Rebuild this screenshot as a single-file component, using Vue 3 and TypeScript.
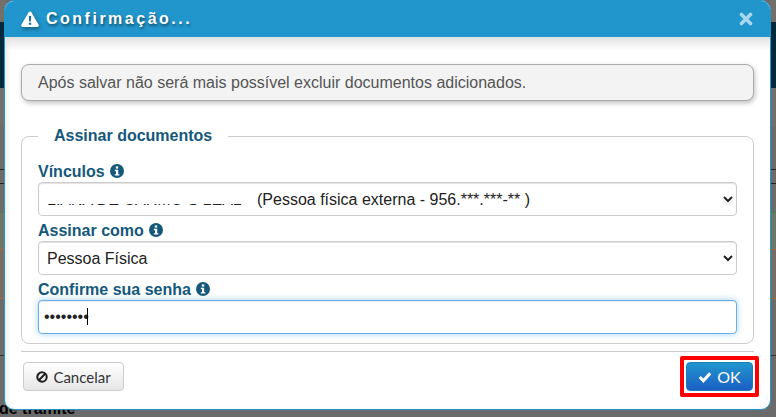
<template>
  <div class="page">
    <div class="backdrop">
      <div class="strip strip-left"></div>
      <div class="strip strip-right"></div>
      <span class="behind-text">de tramite</span>
    </div>

    <div class="modal">
      <header class="modal-header">
        <svg class="warn-icon" viewBox="0 0 18 16" width="18" height="16">
          <path fill-rule="evenodd" fill="#fff" d="M9 0.4c.6 0 1.1.3 1.4.8l7.2 12.6c.6 1-.1 2.2-1.4 2.2H1.8C.5 16-.2 14.800.4 13.800L7.600 1.200C7.900.7 8.400.4 9 .4zM7.800 5l.3 5.600h1.800L10.200 5H7.800zM7.800 11.700v2.100h2.400v-2.100H7.800z" />
        </svg>
        <h4 class="modal-title">Confirmação...</h4>
        <svg class="close-icon" viewBox="0 0 14 14" width="14" height="14">
          <path d="M2.500 2.500l9 9M11.500 2.500l-9 9" stroke="#a9d7ee" stroke-width="3.600" stroke-linecap="round" fill="none" />
        </svg>
      </header>

      <div class="modal-body">
        <div class="alert-box">Após salvar não será mais possível excluir documentos adicionados.</div>

        <fieldset class="sign-box">
          <legend class="sign-legend">Assinar documentos</legend>

          <div class="field-label field-first">Vínculos <InfoIcon /></div>
          <div class="select-wrap">
            <select class="control control-link">
              <option>(Pessoa física externa - 956.***.***-** )</option>
            </select>
            <span class="hidden-name">LIANA DE CARMO S LEAL</span>
          </div>

          <div class="field-label">Assinar como <InfoIcon /></div>
          <select class="control">
            <option>Pessoa Física</option>
          </select>

          <div class="field-label">Confirme sua senha <InfoIcon /></div>
          <div class="select-wrap">
            <input class="control control-focus" type="password" value="12345678" />
            <span class="caret"></span>
          </div>
        </fieldset>
      </div>

      <footer class="modal-footer">
        <button class="btn btn-cancel" type="button">
          <svg viewBox="0 0 14 14" width="12" height="12">
            <circle cx="7" cy="7" r="5.500" fill="none" stroke="#222" stroke-width="2.400" />
            <path d="M3.300 10.700l7.400-7.400" stroke="#222" stroke-width="2.400" />
          </svg>
          Cancelar
        </button>
        <div class="ok-highlight">
          <button class="btn btn-ok" type="button">
            <svg viewBox="0 0 14 12" width="14" height="12">
              <path d="M1.800 6l3.600 3.800L12.200 2.200" fill="none" stroke="#fff" stroke-width="3" />
            </svg>
            OK
          </button>
        </div>
      </footer>
    </div>
  </div>
</template>

<script setup lang="ts">
import { h } from 'vue'

const InfoIcon = () =>
  h('svg', { viewBox: '0 0 14 14', width: 14, height: 14, style: 'vertical-align:-1px;margin-left:1px' }, [
    h('circle', { cx: 7, cy: 7, r: 7, fill: '#14587c' }),
    h('rect', { x: 5.8, y: 2.4, width: 2.4, height: 2.2, fill: '#fff' }),
    h('path', { d: 'M4.800 5.800h3.400v4.400h1.200v1.400H4.800v-1.400h1.200V7.200H4.800z', fill: '#fff' }),
  ])
</script>

<style>
html,
body {
  margin: 0;
  background: #6b6b6b;
}
</style>

<style scoped>
.page {
  position: relative;
  width: 776px;
  height: 417px;
  overflow: hidden;
  background: #6b6b6b;
  font-family: "Liberation Sans", Arial, sans-serif;
}
.backdrop {
  position: absolute;
  inset: 0;
}
.strip {
  position: absolute;
  top: 0;
  width: 6px;
  height: 408px;
  background: linear-gradient(
    #756f6a 0 22px,
    #04283c 22px 88px,
    #6f6f6f 88px 127px,
    #6b6b6b 127px 169px,
    #222 169px 170px,
    #6b6b6b 170px 183px,
    #222 183px 184px,
    #6b6b6b 184px 212px,
    #4e7a4e 212px 213px,
    #6d7568 213px 249px,
    #a5693a 249px 250px,
    #776d66 250px 298px,
    #a5693a 298px 299px,
    #6b6b6b 299px 355px,
    #333 355px 356px,
    #6b6b6b 356px
  );
}
.strip-left {
  left: 0;
}
.strip-right {
  right: 0;
}
.behind-text {
  position: absolute;
  left: -1px;
  top: 400px;
  font-size: 16px;
  font-weight: 700;
  color: #000;
}
.modal {
  position: absolute;
  left: 4px;
  top: 0;
  width: 767px;
  height: 410px;
  box-sizing: border-box;
  display: flex;
  flex-direction: column;
  background: #fff;
  border: 1px solid #2196cd;
  border-radius: 10px;
  overflow: hidden;
  box-shadow: inset 4px 0 6px -3px rgba(0, 0, 0, 0.12);
}
.modal-header {
  flex: none;
  height: 36px;
  box-sizing: border-box;
  padding: 0 17px 0 16px;
  display: flex;
  align-items: center;
  gap: 7px;
  background: #2196cd;
}
.warn-icon {
  flex: none;
  filter: drop-shadow(1px 2px 2px rgba(0, 0, 0, 0.4));
}
.modal-title {
  flex: 1;
  margin: 0;
  font-size: 16px;
  font-weight: 700;
  letter-spacing: 2.500px;
  color: #fff;
  text-shadow: 1px 2px 3px rgba(0, 0, 0, 0.5);
}
.modal-body {
  flex: none;
  height: 314px;
  box-sizing: border-box;
  padding: 27px 16px 0;
  background: linear-gradient(#e2e2e2, rgba(255, 255, 255, 0) 14px);
}
.alert-box {
  height: 37px;
  box-sizing: border-box;
  padding: 0 16px;
  line-height: 35px;
  font-size: 16px;
  color: #555;
  background: #f3f3f3;
  border: 1px solid #aaa;
  border-radius: 8px;
  box-shadow: 1px 2px 5px rgba(0, 0, 0, 0.25);
}
.sign-box {
  height: 217px;
  box-sizing: border-box;
  margin: 26px 0 0;
  padding: 0 16px;
  border: 1px solid #ccc;
  border-radius: 8px;
  min-width: 0;
}
.sign-legend {
  padding: 0 16px;
  font-size: 16px;
  line-height: 18px;
  font-weight: 700;
  color: #14587c;
}
.field-label {
  height: 20px;
  line-height: 20px;
  margin-top: 5px;
  font-size: 16px;
  font-weight: 700;
  color: #14587c;
}
.field-first {
  margin-top: 17px;
}
.select-wrap {
  position: relative;
}
.control {
  display: block;
  width: 100%;
  height: 34px;
  box-sizing: border-box;
  padding: 0 4px;
  font-family: inherit;
  font-size: 16px;
  color: #222;
  background: #fff;
  border: 1px solid #ccc;
  border-radius: 4px;
  box-shadow: inset 0 1px 1px rgba(0, 0, 0, 0.12);
  outline: none;
}
.control-link {
  padding-left: 214px;
}
.control-focus {
  padding-left: 5px;
  border-color: #66afe9;
  box-shadow: inset 0 1px 1px rgba(0, 0, 0, 0.08), 0 0 6px rgba(102, 175, 233, 0.6);
}
.hidden-name {
  position: absolute;
  left: 9px;
  top: 9px;
  font-size: 16px;
  white-space: nowrap;
  color: #222;
  clip-path: inset(13px 0 0 0);
}
.caret {
  position: absolute;
  left: 49px;
  top: 8px;
  width: 1px;
  height: 17px;
  background: #000;
}
.modal-footer {
  flex: 1;
  margin: 0 16px;
  padding: 10px 2px 0;
  display: flex;
  justify-content: space-between;
  align-items: flex-start;
  border-top: 1px solid #ccc;
}
.btn {
  height: 29px;
  box-sizing: border-box;
  display: inline-flex;
  align-items: center;
  justify-content: center;
  gap: 5px;
  font-family: Lato, sans-serif;
  font-size: 15px;
  border-radius: 4px;
}
.btn-cancel {
  width: 101px;
  color: #333;
  background: linear-gradient(#fff, #e6e6e6);
  border: 1px solid #ccc;
}
.ok-highlight {
  margin: -6px -7px 0 0;
  padding: 2px;
  border: 4px solid #f00;
  border-radius: 2px;
}
.btn-ok {
  width: 67px;
  font-size: 16px;
  color: #fff;
  background: linear-gradient(#2196cd, #1c5fc4);
  border: 1px solid #1b7fb8;
}
</style>
